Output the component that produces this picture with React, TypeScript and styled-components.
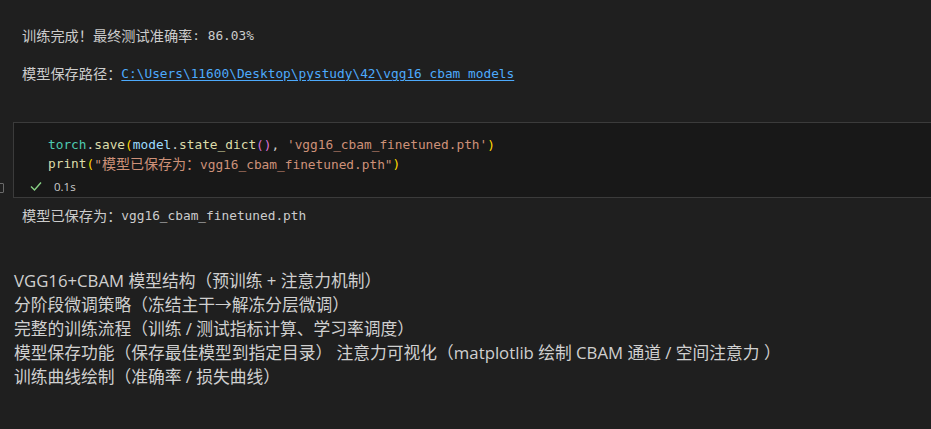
import React from 'react';
import styled, { createGlobalStyle } from 'styled-components';

// style
const GlobalStyle = createGlobalStyle`
  html, body {
    margin: 0;
    padding: 0;
    background: #1f1f1f;
  }
  body {
    width: 931px;
    height: 429px;
    overflow: hidden;
  }
`;

const Page = styled.div`
  display: flex;
  flex-direction: column;
  color: #cccccc;
`;

const OutputBlock = styled.div<{ $top: number }>`
  display: flex;
  flex-direction: column;
  padding: ${p => p.$top}px 0 0 22px;
`;

const OutputLine = styled.div`
  height: 19px;
  line-height: 19px;
  white-space: pre;
  color: #cccccc;
  display: flex;
  align-items: center;
`;

const Han = styled.span`
  font-family: "Noto Sans CJK SC", sans-serif;
  font-size: 14.2px;
`;

const Mono = styled.span`
  font-family: "DejaVu Sans Mono", monospace;
  font-size: 12.8px;
`;

const Link = styled(Mono)`
  color: #4daafc;
  text-decoration: underline;
  text-underline-offset: 2px;
`;

const Cell = styled.div`
  position: relative;
  margin: 39px 0 0 13px;
  height: 76px;
  box-sizing: border-box;
  background: #181818;
  border: 1px solid #3b3b3b;
  border-right: none;
  display: flex;
  flex-direction: column;
  padding-top: 12px;
`;

const Editor = styled.div`
  display: flex;
  flex-direction: column;
  padding-left: 34px;
`;

const CodeLine = styled.div`
  height: 19px;
  line-height: 19px;
  white-space: pre;
  font-family: "DejaVu Sans Mono", monospace;
  font-size: 12.8px;
  color: #cccccc;
  display: flex;
  align-items: center;
`;

const Tok = styled.span<{ $c: string }>`
  color: ${p => p.$c};
`;

const CodeHan = styled.span`
  font-family: "Noto Sans CJK SC", sans-serif;
  font-size: 14px;
`;

const Status = styled.div`
  margin-top: 4px;
  height: 18px;
  display: flex;
  align-items: center;
  gap: 11px;
  padding-left: 15px;
  font-family: "Open Sans", "Noto Sans", sans-serif;
  font-size: 11.5px;
  color: #cccccc;
`;

const Collapse = styled.span`
  position: absolute;
  left: -16px;
  top: 60px;
  width: 4px;
  height: 8px;
  border: 1px solid #6a6a6a;
  border-radius: 1px;
`;

const Markdown = styled.div`
  display: flex;
  flex-direction: column;
  padding: 44px 0 0 14px;
  font-family: "Open Sans", "Noto Sans CJK SC", sans-serif;
  font-size: 16.75px;
  color: #d0d0d0;
`;

const MdLine = styled.div`
  height: 24px;
  line-height: 24px;
  white-space: pre;
`;

const Check = () => (
  <svg width="14" height="14" viewBox="0 0 14 14">
    <polyline points="2,7.5 5.5,11 12,3.5" fill="none" stroke="#89d185" strokeWidth="1.4" />
  </svg>
);

const C = {
  cls: '#4ec9b0',
  fn: '#dcdcaa',
  br1: '#ffd700',
  br2: '#da70d6',
  v: '#9cdcfe',
  str: '#ce9178',
  p: '#cccccc',
};

const notes = [
  'VGG16+CBAM 模型结构（预训练 + 注意力机制）',
  '分阶段微调策略（冻结主干→解冻分层微调）',
  '完整的训练流程（训练 / 测试指标计算、学习率调度）',
  '模型保存功能（保存最佳模型到指定目录） 注意力可视化（matplotlib 绘制 CBAM 通道 / 空间注意力 ）',
  '训练曲线绘制（准确率 / 损失曲线）',
];

export default function App() {
  return (
    <Page>
      <GlobalStyle />
      <OutputBlock $top={26}>
        <OutputLine>
          <Han>训练完成！最终测试准确率</Han>
          <Mono>: 86.03%</Mono>
        </OutputLine>
        <OutputLine />
        <OutputLine>
          <Han>模型保存路径：</Han>
          <Link>C:\Users\11600\Desktop\pystudy\42\vgg16_cbam_models</Link>
        </OutputLine>
      </OutputBlock>

      <Cell>
        <Collapse />
        <Editor>
          <CodeLine>
            <Tok $c={C.cls}>torch</Tok>
            <Tok $c={C.p}>.</Tok>
            <Tok $c={C.fn}>save</Tok>
            <Tok $c={C.br1}>(</Tok>
            <Tok $c={C.v}>model</Tok>
            <Tok $c={C.p}>.</Tok>
            <Tok $c={C.fn}>state_dict</Tok>
            <Tok $c={C.br2}>()</Tok>
            <Tok $c={C.p}>, </Tok>
            <Tok $c={C.str}>'vgg16_cbam_finetuned.pth'</Tok>
            <Tok $c={C.br1}>)</Tok>
          </CodeLine>
          <CodeLine>
            <Tok $c={C.fn}>print</Tok>
            <Tok $c={C.br1}>(</Tok>
            <Tok $c={C.str}>"<CodeHan>模型已保存为：</CodeHan>vgg16_cbam_finetuned.pth"</Tok>
            <Tok $c={C.br1}>)</Tok>
          </CodeLine>
        </Editor>
        <Status>
          <Check />
          <span>0.1s</span>
        </Status>
      </Cell>

      <OutputBlock $top={8}>
        <OutputLine>
          <Han>模型已保存为：</Han>
          <Mono>vgg16_cbam_finetuned.pth</Mono>
        </OutputLine>
      </OutputBlock>

      <Markdown>
        {notes.map(n => (
          <MdLine key={n}>{n}</MdLine>
        ))}
      </Markdown>
    </Page>
  );
}
